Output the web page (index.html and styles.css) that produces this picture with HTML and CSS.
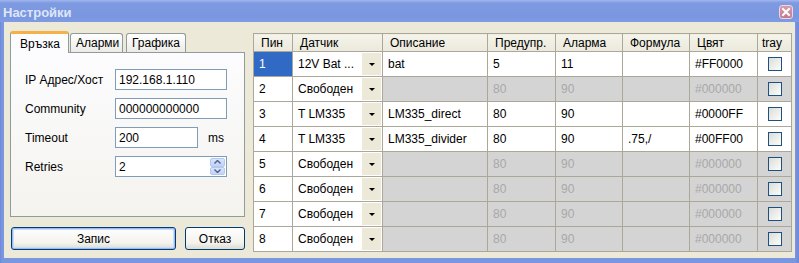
FILE: index.html
```html
<!DOCTYPE html>
<html lang="bg">
<head>
  <meta charset="UTF-8">
  <title>Настройки</title>
  <link rel="stylesheet" href="styles.css">
</head>
<body>
  <div class="window">
    <div class="titlebar">
      <span class="title">Настройки</span>
      <span class="close">
        <svg width="12" height="12" viewBox="0 0 12 12"><path d="M3 3 L9 9 M9 3 L3 9" stroke="#fff" stroke-width="2" stroke-linecap="square"/></svg>
      </span>
    </div>
    <div class="frame">
      <div class="client">
        <div class="left">
          <div class="tabs">
            <div class="tab active">Връзка</div>
            <div class="tab">Аларми</div>
            <div class="tab tab-last">Графика</div>
          </div>
          <div class="panel">
            <div class="field">
              <label>IP Адрес/Хост</label>
              <div class="input">192.168.1.110</div>
            </div>
            <div class="field">
              <label>Community</label>
              <div class="input">000000000000</div>
            </div>
            <div class="field">
              <label>Timeout</label>
              <div class="input short">200</div>
              <span class="unit">ms</span>
            </div>
            <div class="field">
              <label>Retries</label>
              <div class="input spin">
                <span class="spin-text">2</span>
                <span class="spin-btns">
                  <span class="spin-btn"><svg width="7" height="4" viewBox="0 0 7 4"><path d="M0.5 3.5 L3.5 0.5 L6.5 3.5" fill="none" stroke="#4d6185" stroke-width="1.4"/></svg></span>
                  <span class="spin-btn"><svg width="7" height="4" viewBox="0 0 7 4"><path d="M0.5 0.5 L3.5 3.5 L6.5 0.5" fill="none" stroke="#4d6185" stroke-width="1.4"/></svg></span>
                </span>
              </div>
            </div>
          </div>
          <div class="buttons">
            <button class="btn btn-default">Запис</button>
            <button class="btn btn-cancel">Отказ</button>
          </div>
        </div>

        <table class="grid">
          <colgroup>
            <col class="c-pin">
            <col class="c-sensor">
            <col class="c-desc">
            <col class="c-warn">
            <col class="c-alarm">
            <col class="c-formula">
            <col class="c-color">
            <col class="c-tray">
          </colgroup>
          <thead>
            <tr>
              <th>Пин</th>
              <th>Датчик</th>
              <th>Описание</th>
              <th>Предупр.</th>
              <th>Аларма</th>
              <th>Формула</th>
              <th>Цвят</th>
              <th class="th-tray">tray</th>
            </tr>
          </thead>
          <tbody>
            <tr>
              <td class="selected">1</td>
              <td class="sensor"><div class="sel"><span class="sel-text">12V Bat ...</span><span class="drop"></span></div></td>
              <td>bat</td>
              <td>5</td>
              <td>11</td>
              <td></td>
              <td>#FF0000</td>
              <td class="tray"><span class="check"></span></td>
            </tr>
            <tr class="off">
              <td>2</td>
              <td class="sensor"><div class="sel"><span class="sel-text">Свободен</span><span class="drop"></span></div></td>
              <td></td>
              <td>80</td>
              <td>90</td>
              <td></td>
              <td>#000000</td>
              <td class="tray"><span class="check"></span></td>
            </tr>
            <tr>
              <td>3</td>
              <td class="sensor"><div class="sel"><span class="sel-text">T LM335</span><span class="drop"></span></div></td>
              <td>LM335_direct</td>
              <td>80</td>
              <td>90</td>
              <td></td>
              <td>#0000FF</td>
              <td class="tray"><span class="check"></span></td>
            </tr>
            <tr>
              <td>4</td>
              <td class="sensor"><div class="sel"><span class="sel-text">T LM335</span><span class="drop"></span></div></td>
              <td>LM335_divider</td>
              <td>80</td>
              <td>90</td>
              <td>.75,/</td>
              <td>#00FF00</td>
              <td class="tray"><span class="check"></span></td>
            </tr>
            <tr class="off">
              <td>5</td>
              <td class="sensor"><div class="sel"><span class="sel-text">Свободен</span><span class="drop"></span></div></td>
              <td></td>
              <td>80</td>
              <td>90</td>
              <td></td>
              <td>#000000</td>
              <td class="tray"><span class="check"></span></td>
            </tr>
            <tr class="off">
              <td>6</td>
              <td class="sensor"><div class="sel"><span class="sel-text">Свободен</span><span class="drop"></span></div></td>
              <td></td>
              <td>80</td>
              <td>90</td>
              <td></td>
              <td>#000000</td>
              <td class="tray"><span class="check"></span></td>
            </tr>
            <tr class="off">
              <td>7</td>
              <td class="sensor"><div class="sel"><span class="sel-text">Свободен</span><span class="drop"></span></div></td>
              <td></td>
              <td>80</td>
              <td>90</td>
              <td></td>
              <td>#000000</td>
              <td class="tray"><span class="check"></span></td>
            </tr>
            <tr class="off">
              <td>8</td>
              <td class="sensor"><div class="sel"><span class="sel-text">Свободен</span><span class="drop"></span></div></td>
              <td></td>
              <td>80</td>
              <td>90</td>
              <td></td>
              <td>#000000</td>
              <td class="tray"><span class="check"></span></td>
            </tr>
          </tbody>
        </table>
      </div>
    </div>
  </div>
</body>
</html>
```

FILE: styles.css
```css
* {
  box-sizing: border-box;
}
body {
  margin: 0;
  font-family: "Liberation Sans", Arial, sans-serif;
  font-size: 12px;
  color: #000;
  background: #7a96df;
}
.window {
  width: 799px;
  height: 263px;
  display: flex;
  flex-direction: column;
  background: #7a96df;
  overflow: hidden;
}
.titlebar {
  height: 22px;
  display: flex;
  align-items: center;
  justify-content: space-between;
  padding: 2px 6px 0 3px;
  background: linear-gradient(#a0b6ec 0, #7e9ae1 3px, #7a96df 16px, #7f9be2 22px);
}
.title {
  font-weight: bold;
  font-size: 13px;
  color: #dde6f8;
}
.close {
  width: 14px;
  height: 14px;
  display: flex;
  align-items: center;
  justify-content: center;
  border: 1px solid #eed7df;
  border-radius: 3px;
  background: linear-gradient(#d79bac, #c27b91);
}
.frame {
  flex: 1;
  padding: 0 4px 5px 4px;
  background: linear-gradient(90deg, #6c88d8 0, #7a96df 2px, #7a96df 795px, #6c88d8 799px);
}
.client {
  height: 100%;
  display: flex;
  padding: 9px 0 0 6px;
  background: #ece9d8;
}

/* left side: tabs and buttons */
.left {
  width: 235px;
  margin-right: 8px;
  display: flex;
  flex-direction: column;
}
.tabs {
  height: 22px;
  display: flex;
  align-items: flex-end;
  position: relative;
  z-index: 1;
  margin-bottom: -1px;
}
.tab {
  height: 19px;
  padding: 2px 0 0 5px;
  width: 53px;
  border: 1px solid #919b9c;
  border-bottom: none;
  border-radius: 3px 3px 0 0;
  background: linear-gradient(#fff, #ecebe6);
  margin-bottom: 1px;
}
.tab.active {
  height: 22px;
  width: 59px;
  padding: 3px 0 0 9px;
  margin-bottom: 0;
  border-top: 3px solid #f5b046;
  background: #fcfcfe;
  margin-right: 1px;
}
.tab-last {
  width: 60px;
  margin-left: 3px;
}
.panel {
  height: 165px;
  border: 1px solid #919b9c;
  background: linear-gradient(#fcfcfe, #f4f3ee);
  padding: 16px 0 0 14px;
}
.field {
  height: 21px;
  display: flex;
  align-items: center;
  margin-bottom: 8px;
}
.field label {
  width: 90px;
}
.input {
  width: 112px;
  height: 21px;
  border: 1px solid #7f9db9;
  background: #fff;
  padding: 3px 0 0 3px;
  font-size: 12px;
}
.input.short {
  width: 83px;
}
.unit {
  margin-left: 10px;
}
.spin {
  display: flex;
  justify-content: space-between;
  padding: 0 1px 0 3px;
}
.spin-text {
  padding-top: 3px;
}
.spin-btns {
  display: flex;
  flex-direction: column;
  width: 15px;
  padding: 1px 0;
}
.spin-btn {
  flex: 1;
  display: flex;
  align-items: center;
  justify-content: center;
  background: linear-gradient(#d8e4fc, #c1d3fb);
  border: 1px solid #b6c8f0;
  border-radius: 2px;
}
.buttons {
  display: flex;
  margin-top: 10px;
  padding-left: 1px;
}
.btn {
  height: 23px;
  font-family: "Liberation Sans", Arial, sans-serif;
  font-size: 12px;
  border: 1px solid #003c74;
  border-radius: 3px;
  background: linear-gradient(#fefefe, #f4f3ee 70%, #dedcd0);
  padding: 0;
}
.btn-default {
  width: 165px;
  box-shadow: inset 0 0 0 1px #9bb9ee, inset 0 0 0 2px #c9dcf8;
}
.btn-cancel {
  width: 60px;
  margin-left: 9px;
}

/* sensors grid */
.grid {
  margin-top: 2px;
  width: 538px;
  height: 218px;
  border-collapse: collapse;
  table-layout: fixed;
  background: #fff;
}
.c-pin { width: 39px; }
.c-sensor { width: 90px; }
.c-desc { width: 105px; }
.c-warn { width: 68px; }
.c-alarm { width: 67px; }
.c-formula { width: 67px; }
.c-color { width: 68px; }
.c-tray { width: 34px; }
.grid th,
.grid td {
  border: 1px solid #aca899;
  text-align: left;
  white-space: nowrap;
  overflow: hidden;
}
.grid th {
  height: 18px;
  font-weight: normal;
  padding: 0 0 0 7px;
  background: linear-gradient(#f5f4ea, #ebe9dc);
}
.grid th.th-tray {
  padding-left: 4px;
}
.grid td {
  height: 25px;
  padding: 0 5px;
}
.grid td.selected {
  background: #316ac5;
  color: #fff;
}
.grid tr.off td {
  background: #d4d4d4;
  color: #a8a8a8;
}
.grid tr.off td:first-child,
.grid tr.off td.sensor {
  background: #fff;
  color: #000;
}
.grid td.sensor {
  padding: 0;
}
.sel {
  display: flex;
  height: 23px;
  align-items: center;
}
.sel-text {
  flex: 1;
  padding-left: 5px;
}
.drop {
  width: 19px;
  height: 22px;
  margin-right: 1px;
  background: #ece9d8;
  position: relative;
}
.drop::after {
  content: "";
  position: absolute;
  left: 7px;
  top: 10px;
  border-left: 3px solid transparent;
  border-right: 3px solid transparent;
  border-top: 3px solid #000;
}
.grid td.tray {
  text-align: center;
  padding: 0;
}
.check {
  display: inline-block;
  width: 14px;
  height: 14px;
  margin-top: 3px;
  border: 1px solid #1c5180;
  background: linear-gradient(135deg, #dcdcd7, #fdfdfb);
}
```
